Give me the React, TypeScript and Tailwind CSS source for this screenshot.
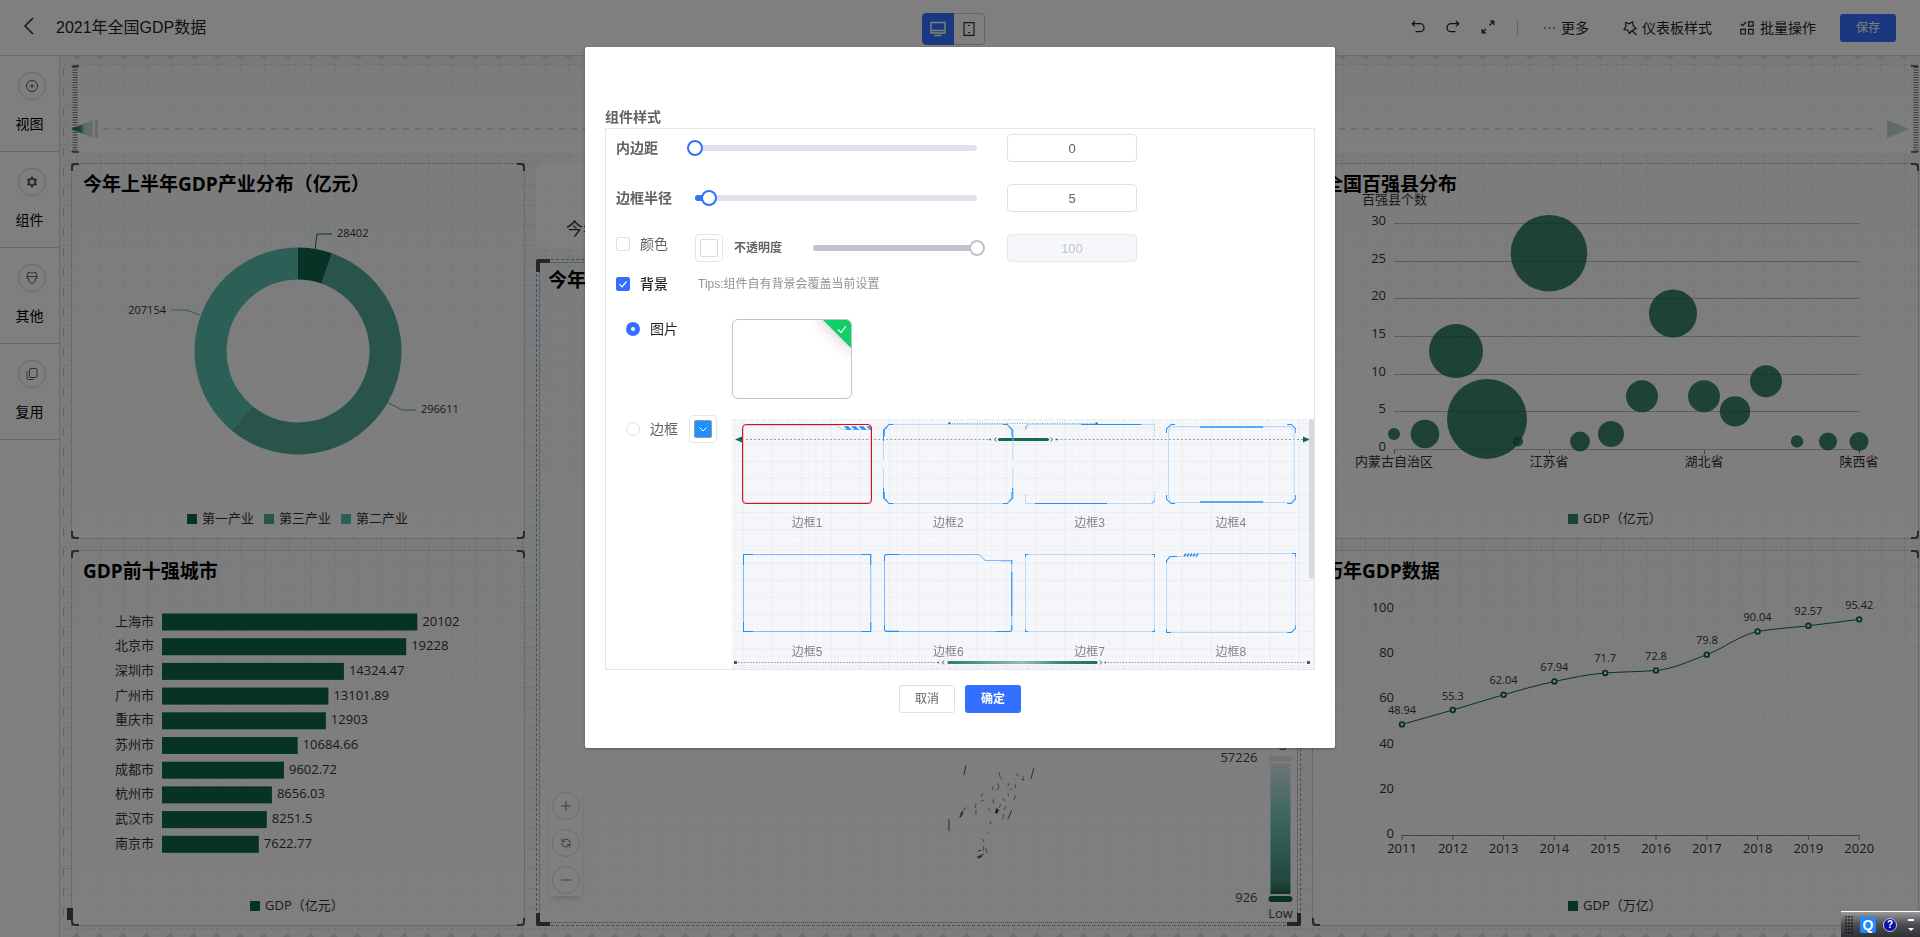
import React, { useState } from 'react';

const GREEN = '#0c664c';
const TEAL = '#52a898';
const MINT = '#58beaa';

interface BarItem {
  name: string;
  value: number;
}

const cities: BarItem[] = [
  { name: '上海市', value: 20102 },
  { name: '北京市', value: 19228 },
  { name: '深圳市', value: 14324.47 },
  { name: '广州市', value: 13101.89 },
  { name: '重庆市', value: 12903 },
  { name: '苏州市', value: 10684.66 },
  { name: '成都市', value: 9602.72 },
  { name: '杭州市', value: 8656.03 },
  { name: '武汉市', value: 8251.5 },
  { name: '南京市', value: 7622.77 },
];

// [number of counties, radius]
const bubbles: [number, number][] = [
  [2, 6], [2, 14.3], [13, 27], [4, 40], [1, 5], [26, 38.3], [1, 10], [2, 13],
  [7, 16], [18, 24], [7, 16], [5, 15.2], [9, 16], [1, 6.2], [1, 9], [1, 9.5],
];

const provinces = ['内蒙古自治区', '江苏省', '湖北省', '陕西省'];

const yearly = [48.94, 55.3, 62.04, 67.94, 71.7, 72.8, 79.8, 90.04, 92.57, 95.42];

/* ---------- widget frame ---------- */

interface PanelProps {
  title: string;
  active?: boolean;
  className?: string;
  children?: React.ReactNode;
}

const Panel: React.FC<PanelProps> = ({ title, active, className = '', children }) => {
  const corner = active ? 'w-[14px] h-[13px] border-[#4a4a4a]' : 'w-2 h-2 border-[#555]';
  const tl = active ? 'border-t-4 border-l-4' : 'border-t-2 border-l-2';
  const tr = active ? 'border-t-4 border-r-4' : 'border-t-2 border-r-2';
  const bl = active ? 'border-b-4 border-l-4' : 'border-b-2 border-l-2';
  const br = active ? 'border-b-4 border-r-4' : 'border-b-2 border-r-2';
  return (
    <section className={`relative min-h-0 bg-linear-to-b from-white/30 to-white/90 ${className}`}>
      <div className={active ? 'absolute inset-0 border border-dashed border-[#57a8e6]' : 'absolute inset-0 border border-dotted border-[#aaa]'} />
      {active && <div className="absolute inset-[3px] border border-dotted border-[#888]" />}
      <span className={`absolute top-0 left-0 rounded-tl ${corner} ${tl}`} />
      <span className={`absolute top-0 right-0 rounded-tr ${corner} ${tr}`} />
      <span className={`absolute bottom-0 left-0 rounded-bl ${corner} ${bl}`} />
      <span className={`absolute bottom-0 right-0 rounded-br ${corner} ${br}`} />
      {children}
      <h2 className="absolute top-[7px] left-3 text-[19px] leading-7 font-bold text-black whitespace-nowrap font-['Open_Sans','Noto_Sans_CJK_SC',sans-serif]">{title}</h2>
    </section>
  );
};

const chartClass = "absolute inset-0 w-full h-full text-[13px] font-['Open_Sans','Noto_Sans_CJK_SC',sans-serif]";

const Legend: React.FC<{ x: number; label: string; color?: string; opacity?: number }> = ({ x, label, color = GREEN, opacity = 1 }) => (
  <g>
    <rect x={x} y="351" width="10" height="10" fill={color} fillOpacity={opacity} />
    <text x={x + 15} y="355" fill="#333" dominantBaseline="central">{label}</text>
  </g>
);

/* ---------- charts ---------- */

const PieChart = () => {
  const cx = 227;
  const cy = 188;
  const data = [
    { value: 28402, color: GREEN },
    { value: 296611, color: TEAL },
    { value: 207154, color: MINT },
  ];
  const total = data.reduce((s, d) => s + d.value, 0);
  const pt = (r: number, a: number) => `${cx + r * Math.sin(a)} ${cy - r * Math.cos(a)}`;
  let angle = 0;
  const slices = data.map((d) => {
    const start = angle;
    angle += (d.value / total) * Math.PI * 2;
    const large = angle - start > Math.PI ? 1 : 0;
    return {
      color: d.color,
      path: `M${pt(103.5, start)}A103.5 103.5 0 ${large} 1 ${pt(103.5, angle)}L${pt(71.5, angle)}A71.5 71.5 0 ${large} 0 ${pt(71.5, start)}Z`,
    };
  });
  return (
    <svg viewBox="0 0 454 376" className={chartClass}>
      {slices.map((s) => <path key={s.color} d={s.path} fill={s.color} />)}
      <g fill="none" strokeWidth="1">
        <path d="M244 86l2-15h15" stroke={GREEN} />
        <path d="M316 239l15 8h14" stroke={TEAL} />
        <path d="M129 152l-14-5h-15" stroke={MINT} />
      </g>
      <g fontSize="11" fill="#333" dominantBaseline="central">
        <text x="266" y="69">28402</text>
        <text x="350" y="245">296611</text>
        <text x="95" y="146" textAnchor="end">207154</text>
      </g>
      <Legend x={116} label="第一产业" />
      <Legend x={193} label="第三产业" color={TEAL} />
      <Legend x={270} label="第二产业" color={MINT} />
    </svg>
  );
};

const BarChart = () => (
  <svg viewBox="0 0 454 376" className={chartClass}>
    {cities.map((c, i) => {
      const y = 63.5 + i * 24.7;
      const w = c.value * 0.0127;
      return (
        <g key={c.name} fill="#333" dominantBaseline="central">
          <text x="83" y={y + 7} textAnchor="end">{c.name}</text>
          <rect x="91" y={y} width={w} height="17" fill={GREEN} />
          <text x={91 + w + 5} y={y + 7}>{c.value}</text>
        </g>
      );
    })}
    <Legend x={179} label="GDP（亿元）" />
  </svg>
);

const BubbleChart = () => {
  const zero = 286;
  const step = 7.53;
  return (
    <svg viewBox="0 0 607 376" className={chartClass}>
      <g fill="#333" dominantBaseline="central">
        <text x="50" y="36">百强县个数</text>
        {[0, 5, 10, 15, 20, 25, 30].map((v) => (
          <g key={v}>
            <line x1="82" x2="547" y1={Math.round(zero - v * step) + 0.5} y2={Math.round(zero - v * step) + 0.5} stroke="#bbb" />
            <text x="74" y={zero - v * step - 3} textAnchor="end">{v}</text>
          </g>
        ))}
        {provinces.map((p, i) => (
          <g key={p}>
            <line x1={82.5 + i * 155} x2={82.5 + i * 155} y1="287" y2="291" stroke="#888" />
            <text x={82 + i * 155} y="298" textAnchor="middle">{p}</text>
          </g>
        ))}
      </g>
      <Legend x={256} label="GDP（亿元）" opacity={0.8} />
      {bubbles.map(([v, r], i) => (
        <circle key={i} cx={82 + i * 31} cy={zero - v * step} r={r} fill={GREEN} fillOpacity="0.8" />
      ))}
    </svg>
  );
};

const LineChart = () => {
  const pts = yearly.map((v, i) => ({ x: 90 + i * 50.8, y: 285 - v * 2.26, v }));
  // harmonic tangents keep the curve from overshooting
  const slope = pts.map((p, i) => {
    const a = pts[Math.max(0, i - 1)];
    const b = pts[Math.min(pts.length - 1, i + 1)];
    if (i === 0 || i === pts.length - 1) return (b.y - a.y) / (b.x - a.x);
    const l = (p.y - a.y) / (p.x - a.x);
    const r = (b.y - p.y) / (b.x - p.x);
    return (2 * l * r) / (l + r);
  });
  const d = pts.reduce((acc, p, i) => {
    if (i === 0) return `M${p.x} ${p.y}`;
    const q = pts[i - 1];
    const h = (p.x - q.x) / 3;
    return `${acc}C${q.x + h} ${q.y + slope[i - 1] * h} ${p.x - h} ${p.y - slope[i] * h} ${p.x} ${p.y}`;
  }, '');
  return (
    <svg viewBox="0 0 607 376" className={chartClass}>
      <g fill="#333" dominantBaseline="central">
        {[0, 20, 40, 60, 80, 100].map((v) => (
          <text key={v} x="82" y={283 - v * 2.26} textAnchor="end">{v}</text>
        ))}
        <line x1="90" x2="547" y1="285.5" y2="285.5" stroke="#888" />
        {pts.map((p, i) => (
          <g key={i}>
            <line x1={p.x} x2={p.x} y1="285" y2="290" stroke="#888" />
            <text x={p.x} y="298" textAnchor="middle">{2011 + i}</text>
            <text x={p.x} y={p.y - 15} textAnchor="middle" fontSize="11">{p.v}</text>
          </g>
        ))}
      </g>
      <Legend x={256} label="GDP（万亿）" />
      <path d={d} fill="none" stroke={GREEN} />
      {pts.map((p) => <circle key={p.v} cx={p.x} cy={p.y} r="2.3" fill="#fff" stroke={GREEN} strokeWidth="1.8" />)}
    </svg>
  );
};

const MapWidget = () => (
  <svg viewBox="0 0 765 668" className={chartClass}>
    <defs>
      <linearGradient id="heat" x1="0" y1="0" x2="0" y2="1">
        <stop offset="0" stopColor="#dfe9ec" />
        <stop offset="0.38" stopColor="#7ed0bf" />
        <stop offset="0.7" stopColor="#55a999" />
        <stop offset="0.9" stopColor="#488c7c" />
        <stop offset="1" stopColor="#1d6650" />
      </linearGradient>
    </defs>
    <g stroke="#555" strokeWidth="1" fill="none">
      <path d="M430 507l-2 10M498 510l-3 11M476 552l-4 9M413 561v12M441 599l7-3M442 593l3-1" />
      <path strokeWidth="0.7" d="M463 514l1 4l2 3M481 515l1 3M485 521l3 1M487 518l1 4M457 528v4M462 525l1 4l-2 3M473 525l-1 3M476 530l-2 2M479 526l1 4M472 535l1 3M447 535l-2 4M458 541l-1 4M467 540l2 3M480 537l-2 5M445 543l3-1M440 546l-1 4M457 543l1 1M424 556l5-6M430 549l-1 2M440 552v5M452 550l2 3M460 550l1 3M465 546l-2 4M470 548l-2 4M468 556l-1 5M455 563l-1 3M453 574l-1 2M447 581l1 3M448 588l-1 5M450 590l1 5" />
      <path stroke="#0b4e3b" strokeWidth="2.5" d="M460 555l2-4" />
      <path stroke="#444" strokeWidth="1.500" d="M424 559l3-5M442 600l4-2" />
    </g>
    <g fill="#444" dominantBaseline="central">
      <text x="745" y="484" textAnchor="middle">High</text>
      <text x="722" y="499" textAnchor="end">57226</text>
      <text x="722" y="639" textAnchor="end">926</text>
      <text x="745" y="655" textAnchor="middle">Low</text>
    </g>
    <rect x="733" y="498" width="24" height="5" rx="2.5" fill="#e2e2e2" />
    <rect x="735" y="505" width="20" height="131" fill="url(#heat)" />
    <rect x="733" y="638" width="24" height="6" rx="3" fill={GREEN} />
  </svg>
);

/* ---------- canvas ---------- */

const CanvasGrid = () => (
  <svg className="absolute inset-0 w-full h-full">
    <defs>
      <pattern id="canvas-grid" x="16.7" y="8" width="23.43" height="20.1" patternUnits="userSpaceOnUse">
        <path d="M.5 0V20" stroke="#d6d8d7" strokeDasharray="2.5 2.5" />
        <path d="M0 .5H23" stroke="#dadcdb" strokeDasharray="2.5 3" />
      </pattern>
      <pattern id="canvas-edge" x="13" y="0" width="23.43" height="6" patternUnits="userSpaceOnUse">
        <path d="M0 .5h8l-2 1.500h-4z" fill="#ccced0" />
      </pattern>
      <pattern id="canvas-foot" x="12" y="0" width="23.43" height="10" patternUnits="userSpaceOnUse">
        <path d="M0 10l4-4l4 4z" fill="#dcdedd" />
      </pattern>
    </defs>
    <rect width="100%" height="100%" fill="url(#canvas-grid)" />
    <rect width="100%" height="4" fill="url(#canvas-edge)" />
    <path d="M3.5 12V870" stroke="#c5c7c8" strokeDasharray="8 12" />
    <svg y="100%" overflow="visible">
      <rect y="-10" width="100%" height="10" fill="url(#canvas-foot)" />
    </svg>
  </svg>
);

const Banner = () => (
  <div className="relative h-[88px] bg-linear-to-b from-white/20 to-white">
    <div className="absolute inset-y-0 left-0 flex items-center">
      <svg width="30" height="88" viewBox="0 0 30 88">
        <defs>
          <linearGradient id="arrow-l">
            <stop offset="0" stopColor="#0c664c" />
            <stop offset="0.45" stopColor="#3f9178" />
            <stop offset="0.6" stopColor="#b5d8cb" />
            <stop offset="1" stopColor="#cfe6de" />
          </linearGradient>
        </defs>
        <path d="M4 2V86" stroke="#777" strokeWidth="5" strokeDasharray="1 1.5" />
        <path d="M1 2q0-1 2-1h5M1 86q0 1 2 1h5" stroke="#444" strokeWidth="1.5" fill="none" />
        <path d="M0 64L22 55V73Z" fill="url(#arrow-l)" />
        <path d="M25.500 55V73" stroke="#d5d9d7" strokeWidth="3" />
      </svg>
    </div>
    <div className="absolute left-8 right-10 top-[63px] h-0.5 bg-[repeating-linear-gradient(90deg,#d8d8d8_0_6px,transparent_6px_12px)]" />
    <div className="absolute inset-y-0 right-0 flex items-center">
      <svg width="34" height="88" viewBox="0 0 34 88">
        <path d="M2 55V73L24 64Z" fill="#c3d6cf" />
        <path d="M31 2V86" stroke="#777" strokeWidth="5" strokeDasharray="1 1.5" />
        <path d="M26 1h5q2 0 2 1M26 87h5q2 0 2-1" stroke="#444" strokeWidth="1.5" fill="none" />
      </svg>
    </div>
  </div>
);

const ZoomControls = () => (
  <div className="absolute left-3.5 bottom-[30px] flex flex-col items-center gap-[9px] w-8 py-0.5 rounded bg-white shadow-md">
    <button aria-label="放大" className="flex items-center justify-center w-7 h-7 rounded-full border border-[#d8d8d8] text-[#777]">
      <svg width="10" height="10" viewBox="0 0 10 10" stroke="currentColor"><path d="M5 0v10M0 5h10" /></svg>
    </button>
    <button aria-label="重置" className="flex items-center justify-center w-7 h-7 rounded-full border border-[#d8d8d8] text-[#777]">
      <svg width="10" height="10" viewBox="0 0 10 10" fill="none" stroke="currentColor"><path d="M1 .5v3h3M9 9.500v-3H6M1.200 3.500A4.200 4.200 0 0 1 9.200 5M8.800 6.500A4.200 4.200 0 0 1 .8 5" /></svg>
    </button>
    <button aria-label="缩小" className="flex items-center justify-center w-7 h-7 rounded-full border border-[#d8d8d8] text-[#777]">
      <svg width="10" height="10" viewBox="0 0 10 10" stroke="currentColor"><path d="M0 5h10" /></svg>
    </button>
  </div>
);

const Canvas = () => (
  <main className="relative flex-1 min-w-0 flex flex-col gap-2.5 pt-[9px] pb-[11px] pl-[11px] pr-px bg-linear-to-b from-[#f3f5f8] to-[#fafafa] overflow-hidden">
    <CanvasGrid />
    <Banner />
    <div className="relative flex-1 min-h-0 grid grid-cols-[454fr_765fr_607fr] gap-[11px]">
      <div className="flex flex-col gap-[11px]">
        <Panel title="今年上半年GDP产业分布（亿元）" className="flex-1"><PieChart /></Panel>
        <Panel title="GDP前十强城市" className="flex-1">
          <BarChart />
          <span className="absolute -left-1 bottom-1.5 w-1.5 h-3 bg-[#444]" />
        </Panel>
      </div>
      <div className="flex flex-col gap-2.5">
        <div className="h-[86px] flex items-center pl-[30px] pt-12 rounded-lg bg-white/90 text-[17px] text-[#333]">今年</div>
        <Panel title="今年" active className="flex-1">
          <MapWidget />
          <ZoomControls />
        </Panel>
      </div>
      <div className="flex flex-col gap-[11px]">
        <Panel title="全国百强县分布" className="flex-1"><BubbleChart /></Panel>
        <Panel title="历年GDP数据" className="flex-1"><LineChart /></Panel>
      </div>
    </div>
  </main>
);

/* ---------- top bar and side bar ---------- */

const TopBar = () => (
  <header className="flex items-center h-14 shrink-0 pl-6 pr-6 pt-px border-b border-[#d5d6d8] bg-white text-sm text-[#1f2329]">
    <button aria-label="返回" className="w-8 pb-1">
      <svg width="10" height="18" viewBox="0 0 10 18" fill="none" stroke="#1f2329" strokeWidth="1.500"><path d="M9 1L1 9l8 8" /></svg>
    </button>
    <h1 className="text-base">2021年全国GDP数据</h1>
    <div className="absolute top-[13px] left-1/2 -translate-x-[38px] flex h-8 rounded overflow-hidden">
      <button aria-label="电脑端" className="flex items-center justify-center w-8 bg-[#3370ff] rounded-l">
        <svg width="16" height="16" viewBox="0 0 16 16" fill="none" stroke="#fff"><path d="M1 1.500h14v10.500H1zM1 9.500h14M4.500 14.500h7" strokeWidth="1.400" /></svg>
      </button>
      <button aria-label="移动端" className="flex items-center justify-center w-[31px] border border-l-0 border-[#c9ccd6] rounded-r">
        <svg width="12" height="14" viewBox="0 0 12 14" fill="none" stroke="#333"><path d="M1 .6h10v12.800H1z" strokeWidth="1.200" /><path d="M5 3.500h2M5 10.500h2" /></svg>
      </button>
    </div>
    <div className="ml-auto flex items-center">
      <div className="flex items-center gap-[21px] pb-0.5">
        <button aria-label="撤销">
          <svg width="14" height="14" viewBox="0 0 14 14" fill="none" stroke="currentColor" strokeWidth="1.300"><path d="M4 1L1.300 3.700L4 6.400M1.300 3.700H9A4 4 0 0 1 9 11.700H4.500" /></svg>
        </button>
        <button aria-label="重做">
          <svg width="14" height="14" viewBox="0 0 14 14" fill="none" stroke="currentColor" strokeWidth="1.300"><path d="M10 1l2.700 2.700L10 6.400M12.700 3.700H5A4 4 0 0 0 5 11.700H9.500" /></svg>
        </button>
        <button aria-label="全屏">
          <svg width="14" height="14" viewBox="0 0 14 14" fill="none" stroke="currentColor" strokeWidth="1.300"><path d="M9 1.200H12.800V5M12.800 1.200L8.500 5.500M5 12.800H1.200V9M1.200 12.800L5 9" /></svg>
        </button>
      </div>
      <span className="w-px h-4 ml-[22px] mr-[26px] bg-[#c4c6ca]" />
      <div className="flex items-center gap-[26px]">
        <button className="flex items-center gap-1.5">
          <svg width="11" height="14" viewBox="0 0 11 14" fill="currentColor"><circle cx="1" cy="7" r=".8" /><circle cx="5.500" cy="7" r=".8" /><circle cx="10" cy="7" r=".8" /></svg>
          更多
        </button>
        <button className="flex items-center gap-1 ml-2">
          <svg width="15" height="15" viewBox="0 0 15 15" fill="none" stroke="currentColor" strokeWidth="1.200"><path d="M2.500 1.300L6 2.800L9.500 1l.7 3.700L13 7.500L10 9l-.7 1.300M2.500 1.300L3 5.300L1 8.500l3.800.7L6.500 12.500L9 9.500M9 9.500l4.500 4.500" /></svg>
          仪表板样式
        </button>
        <button className="flex items-center gap-1.5 ml-0.5">
          <svg width="14" height="14" viewBox="0 0 14 14" fill="none" stroke="currentColor" strokeWidth="1.200"><path d="M.8 3L2.600 4.700L6 1M8.600 .8h4.600v4.400H8.600zM.8 8.400h4.600v4.600H.8zM8.600 8.400h4.600v4.600H8.600z" /></svg>
          批量操作
        </button>
      </div>
      <button className="w-14 h-7 ml-6 rounded-[3px] bg-[#3370ff] text-xs text-white">保存</button>
    </div>
  </header>
);

const sideItems = [
  { label: '视图', icon: <><circle cx="7" cy="7" r="5.500" /><path d="M7 4.500v5M4.500 7h5" /></> },
  { label: '组件', icon: <><circle cx="7" cy="7" r="3.300" strokeWidth="2.200" /><path strokeWidth="2" d="M7 1.500v2M7 10.500v2M2.300 4.200l1.700 1M10 8.800l1.700 1M2.300 9.800l1.700-1M10 5.200l1.700-1" /></> },
  { label: '其他', icon: <path d="M3 1.500h2.500Q7 3 8.500 1.500H11L12 5.500V7.500H10V10L8.500 12h-3L4 10V7.500H2V5.500zM2 5.500h10" /> },
  { label: '复用', icon: <><rect x="4.500" y="1.500" width="7.500" height="9" rx="1.500" /><path d="M2 4.500V11a1.500 1.500 0 0 0 1.500 1.500H9" /></> },
];

const SideBar = () => (
  <nav className="w-[60px] shrink-0 border-r border-[#d5d6d8] bg-white">
    {sideItems.map((s) => (
      <button key={s.label} className="flex flex-col items-center w-full h-24 pt-4 border-b border-[#d0d2d5] text-sm text-black">
        <span className="flex items-center justify-center w-7 h-7 ml-1 rounded-full border border-[#d0d2d5]">
          <svg width="14" height="14" viewBox="0 0 14 14" fill="none" stroke="#5a5e66">{s.icon}</svg>
        </span>
        <span className="mt-3.5">{s.label}</span>
      </button>
    ))}
  </nav>
);

/* ---------- dialog ---------- */

interface SliderProps {
  label: string;
  value: number;
  disabled?: boolean;
  onChange?: (v: number) => void;
}

const Slider: React.FC<SliderProps> = ({ label, value, disabled, onChange }) => (
  <div className="relative flex-1 h-1.5 rounded-[3px] bg-[#dfe2ec]">
    <div className={`h-1.5 rounded-[3px] ${disabled ? 'bg-[#c0c4cc]' : 'bg-[#3370ff]'}`} style={{ width: `${value}%` }} />
    <input
      type="range"
      aria-label={label}
      value={value}
      disabled={disabled}
      onChange={(e) => onChange && onChange(Number(e.target.value))}
      className="absolute -left-2 -top-[5px] w-[calc(100%+16px)] h-4 appearance-none bg-transparent [&::-webkit-slider-thumb]:appearance-none [&::-webkit-slider-thumb]:w-4 [&::-webkit-slider-thumb]:h-4 [&::-webkit-slider-thumb]:rounded-full [&::-webkit-slider-thumb]:border-2 [&::-webkit-slider-thumb]:border-[#3370ff] [&::-webkit-slider-thumb]:bg-white disabled:[&::-webkit-slider-thumb]:border-[#c0c4cc]"
    />
  </div>
);

const NumberBox: React.FC<SliderProps> = ({ label, value, disabled, onChange }) => (
  <input
    type="text"
    aria-label={label}
    value={value}
    disabled={disabled}
    onChange={(e) => onChange && onChange(Number(e.target.value) || 0)}
    className="w-[130px] h-7 ml-[30px] rounded border border-[#dcdfe6] bg-white text-center text-[13px] text-[#606266] disabled:border-[#e4e7ed] disabled:bg-[#f5f7fa] disabled:text-[#c0c4cc]"
  />
);

interface CheckProps {
  label: string;
  checked: boolean;
  onChange: (v: boolean) => void;
}

const Check: React.FC<CheckProps> = ({ label, checked, onChange }) => (
  <label className={`flex items-center gap-2.5 w-[79px] h-5 text-sm ${checked ? 'font-medium text-[#1f2329]' : 'text-[#606266]'}`}>
    <span className="relative flex">
      <input
        type="checkbox"
        checked={checked}
        onChange={(e) => onChange(e.target.checked)}
        className="w-3.5 h-3.5 appearance-none rounded-[2px] border border-[#dcdfe6] bg-white checked:border-[#3370ff] checked:bg-[#3370ff]"
      />
      {checked && (
        <svg className="absolute inset-0 pointer-events-none" width="14" height="14" viewBox="0 0 14 14" fill="none" stroke="#fff" strokeWidth="1.200"><path d="M3.500 7.200L6 9.800L10.500 4.500" /></svg>
      )}
    </span>
    {label}
  </label>
);

const radioClass = 'w-3.5 h-3.5 appearance-none rounded-full border border-[#dcdfe6] bg-white checked:border-[5px] checked:border-[#3370ff]';

const B = '#1e90ff';
const M = '#7dbcfb';
const L = '#b9d9fa';

const frames = [
  <>
    <path d="M2 1.500H95L100 5.500H129" stroke={L} />
    <path d="M128.500 2V77L127 78.500H3L1.500 77V2" stroke={L} />
    <path d="M102 2.500h4l3 3h-4zM109.500 2.500h4l3 3h-4zM117 2.500h4l3 3h-4zM124.500 2.500h4v3h-1z" fill={B} stroke={B} strokeWidth="0.500" />
  </>,
  <>
    <path d="M8 .5H122M8 79.500H122M.5 10V36M129.500 10V36M.5 44V70M129.500 44V70" stroke={L} />
    <path d="M10 .5H6L.5 6V17M120 .5H124L129.500 6V17M10 79.500H6L.5 74V64M120 79.500H124L129.500 74V64" stroke={B} />
    <path d="M1.500 12V6l3-3M128.500 12V6l-3-3M1.500 68V74l3 3M128.500 68V74l-3 3" stroke="#57a9fa" />
  </>,
  <>
    <path d="M.5 5.500L4 .5H129.500V13M129.500 67V76L126 79.500H82L80 78.500M.5 70V79.500H10" stroke={L} />
    <path d="M.5 5.500V3L3 .5M129.500 74V77L126.500 79.500" stroke={M} />
    <path d="M56 .5H116M10 79.500H82" stroke={B} />
  </>,
  <>
    <path d="M6 2.500H124L128 6V74L124 78.500H6L2.500 74V6Z" stroke={L} />
    <path d="M9 .5H5L.5 5V9M121 .5H125L129.500 5V9M9 79.500H5L.5 75V71M121 79.500H125L129.500 75V71" stroke={B} />
    <path d="M34 3H97M34 78H97" stroke="#57a9fa" strokeWidth="2" />
  </>,
  <>
    <path d="M1.500 1.500H128.500V78.500H1.500Z" stroke={M} />
    <path d="M11 1.500H1.500V12M119 1.500H128.500V12M11 78.500H1.500V69M119 78.500H128.500V69" stroke={B} />
  </>,
  <>
    <path d="M3 1.500H96L102 7.500H128.500V77L127 78.500H3L1.500 77V3Z" stroke={M} />
    <path d="M16 1.500H3L1.500 3V8M128.500 19V63M128.500 7V11M113 78.500H127L128.500 77V72M1.500 72V77L3 78.500H16" stroke={B} />
    <path d="M118 8.500H128M3 77.500H16" stroke={L} />
  </>,
  <>
    <path d="M.5 1.500H129.500V78.500H.5Z" stroke={L} />
    <path d="M3 1.500H.5V4M127 1.500H129.500V4M3 78.500H.5V76M127 78.500H129.500V76" stroke={B} />
  </>,
  <>
    <path d="M18 3.500H4L.5 8V79.500H125L129.500 75V.5H32" stroke={L} />
    <path d="M11 3.500H4L.5 8V10M.5 76V79.500H5M121 79.500H125L129.500 75V72M126 .5H129.500V4" stroke={B} />
    <path d="M18 3.500l2-3M21 3.500l2-3M24 3.500l2-3M27 3.500l2-3M30 3.500l2-3" stroke={B} strokeWidth="1.500" />
  </>,
];

const FrameBoard = () => {
  const [selected, setSelected] = useState(0);
  return (
    <div className="relative flex-1 h-[250px] overflow-hidden bg-[#f5f7fa]">
      <svg className="absolute inset-0 w-full h-full" viewBox="0 0 581 250" preserveAspectRatio="none" fill="none">
        <defs>
          <pattern id="board-fine" x="3" y="4" width="7.300" height="6.300" patternUnits="userSpaceOnUse">
            <path d="M.5 0V6.300M0 .5H7.300" stroke="#eef0f2" strokeDasharray="1.500 1" />
          </pattern>
          <pattern id="board-coarse" x="11" y="8" width="29.200" height="17" patternUnits="userSpaceOnUse">
            <path d="M.5 0V17M0 .5H29.200" stroke="#e8eaec" strokeDasharray="1.500 1" />
          </pattern>
          <linearGradient id="bar-fade">
            <stop offset="0" stopColor="#2e7d66" />
            <stop offset="0.5" stopColor="#8fbfb0" />
            <stop offset="0.75" stopColor="#3f8871" />
            <stop offset="1" stopColor="#1f7058" />
          </linearGradient>
        </defs>
        <rect width="581" height="250" fill="url(#board-fine)" />
        <rect width="581" height="250" fill="url(#board-coarse)" />
        <path d="M0 .5H581M0 248.500H581" stroke="#e4e6e7" strokeDasharray="3 3" />
        <path d="M10 20.500H256M324 20.500H570" stroke="#999" strokeDasharray="2 2" />
        <path d="M3 20.500l7-3v6zM577 20.500l-7-3v6z" fill="#136a50" />
        <path d="M267 20.500H315" stroke="#136a50" strokeWidth="3" strokeLinecap="round" />
        <path d="M264 18.500l-2 2l2 2M318 18.500l2 2l-2 2" stroke="#777" />
        <path d="M257 20.500h1.500M323 20.500h1.500" stroke={GREEN} strokeWidth="1.500" />
        <path d="M217 4.500H364" stroke="#7fb09f" strokeDasharray="1 1.500" />
        <path d="M216 4.500h2M363 4.500h2" stroke={GREEN} strokeWidth="2" />
        <path d="M6 243.500H204M375 243.500H573" stroke="#999" strokeDasharray="1.500 1.500" />
        <path d="M2 242h3v3h-3zM574 242h3v3h-3z" fill="#555" />
        <rect x="215" y="242" width="150" height="3" rx="1.500" fill="url(#bar-fade)" />
        <path d="M212 241.500l-2 2l2 2M367 241.500l2 2l-2 2" stroke="#777" />
        <path d="M205 243.500h1.500M372 243.500h1.500" stroke={GREEN} strokeWidth="1.500" />
      </svg>
      <div className="relative grid grid-cols-4 gap-x-[11px] gap-y-[21px] pt-[5px] pl-2.5 pr-[18px]">
        {frames.map((f, i) => (
          <button key={i} onClick={() => setSelected(i)} className="flex flex-col items-center">
            <span className={`relative w-full h-20 ${selected === i ? 'after:absolute after:inset-0 after:rounded after:border after:border-[#f00]' : ''}`}>
              <svg className="w-full h-full" viewBox="0 0 130 80" preserveAspectRatio="none" fill="none">{f}</svg>
            </span>
            <span className="mt-2.5 text-xs leading-[18px] text-[#838383]">边框{i + 1}</span>
          </button>
        ))}
      </div>
      <span className="absolute right-0 top-0 w-[5px] h-40 rounded-full bg-[#d6d9e4]" />
    </div>
  );
};

const StyleDialog = () => {
  const [padding, setPadding] = useState(0);
  const [radius, setRadius] = useState(5);
  const [useColor, setUseColor] = useState(false);
  const [useBackground, setUseBackground] = useState(true);
  const [kind, setKind] = useState('image');

  return (
    <div className="fixed inset-0 flex items-start justify-center pt-[47px] bg-black/50">
      <div role="dialog" aria-labelledby="dialog-title" className="w-[750px] max-w-full px-5 pt-[60px] pb-[35px] rounded-[2px] bg-white shadow-[0_1px_3px_rgba(0,0,0,0.3)] text-[#606266]">
        <h2 id="dialog-title" className="text-sm leading-[21px] font-bold">组件样式</h2>
        <div className="border border-[#e6e6e6] pt-[5px] pl-2.5">
          {/* Padding and radius */}
          <div className="flex items-center h-7 pr-[177px]">
            <span className="w-[79px] text-sm font-bold">内边距</span>
            <Slider label="内边距" value={padding} onChange={setPadding} />
            <NumberBox label="内边距数值" value={padding} onChange={setPadding} />
          </div>
          <div className="flex items-center h-7 mt-[22px] pr-[177px]">
            <span className="w-[79px] text-sm font-bold">边框半径</span>
            <Slider label="边框半径" value={radius} onChange={setRadius} />
            <NumberBox label="边框半径数值" value={radius} onChange={setRadius} />
          </div>

          {/* Colour */}
          <div className="flex items-center h-7 mt-[22px] pr-[177px]">
            <div className="self-start"><Check label="颜色" checked={useColor} onChange={setUseColor} /></div>
            <button aria-label="选择颜色" className="flex items-center justify-center w-7 h-7 rounded border border-[#e6e6e6]">
              <span className="w-[18px] h-[18px] rounded-[2px] border border-[#dcdcdc]" />
            </button>
            <span className="w-[79px] ml-[11px] text-xs font-bold">不透明度</span>
            <Slider label="不透明度" value={100} disabled={!useColor} />
            <NumberBox label="不透明度数值" value={100} disabled={!useColor} />
          </div>

          {/* Background */}
          <div className="flex items-center h-5 mt-3">
            <Check label="背景" checked={useBackground} onChange={setUseBackground} />
            <span className="ml-[3px] text-xs text-[#909399]">Tips:组件自有背景会覆盖当前设置</span>
          </div>
          <div className="flex items-start mt-[25px] pl-2.5">
            <label className="flex items-center gap-2.5 w-[106px] h-5 text-sm text-[#1f2329]">
              <input type="radio" name="kind" checked={kind === 'image'} onChange={() => setKind('image')} className={radioClass} />
              图片
            </label>
            <div className="relative w-[120px] h-20 rounded-md border border-[#b9c6d3] overflow-hidden">
              <span className="absolute -right-[17px] -top-[7px] w-[46px] h-6 rotate-45 bg-[#13ce66] shadow-[0_0_1pc_1px_rgba(0,0,0,0.2)]" />
              <svg className="absolute right-1 top-1" width="10" height="10" viewBox="0 0 10 10" fill="none" stroke="#fff" strokeWidth="1.200"><path d="M1 5.500L4 8.500L9 2" /></svg>
            </div>
          </div>
          <div className="flex items-start mt-5 pl-2.5">
            <div className="flex items-center w-[106px] h-5">
              <label className="flex items-center gap-2.5 h-5 text-sm">
                <input type="radio" name="kind" checked={kind === 'frame'} onChange={() => setKind('frame')} className={radioClass} />
                边框
              </label>
              <button aria-label="边框颜色" className="flex items-center justify-center shrink-0 w-7 h-7 ml-[11px] rounded border border-[#e6e6e6]">
                <span className="flex items-center justify-center w-[18px] h-[18px] rounded-[2px] border border-[#999] bg-[#1e90ff]">
                  <svg width="8" height="8" viewBox="0 0 8 8" fill="none" stroke="#fff"><path d="M.5 2.500L4 6L7.500 2.500" /></svg>
                </span>
              </button>
            </div>
            <FrameBoard />
          </div>
        </div>
        <div className="flex justify-center gap-2.5 pt-[15px] text-xs">
          <button className="w-14 h-7 rounded-[3px] border border-[#dcdfe6] text-[#606266]">取消</button>
          <button className="w-14 h-7 rounded-[3px] bg-[#3370ff] font-bold text-white">确定</button>
        </div>
      </div>
    </div>
  );
};

// Input method bar docked to the screen corner
const ImeBar = () => (
  <div className="fixed right-0 bottom-0 flex items-center w-[79px] h-[26px] pl-1 border-t border-white bg-linear-to-b from-[#9a9a9a] via-[#4a4c50] to-[#2f3136]">
    <svg width="8" height="20" viewBox="0 0 8 20" fill="none" stroke="#111" strokeWidth="1.500" strokeDasharray="1.500 1.700"><path d="M1 1V19M4 1V19M7 1V19" /></svg>
    <span className="flex items-center justify-center w-4 h-4 ml-[7px] rounded-[2px] bg-[#1e88ff] text-sm font-bold text-white">Q</span>
    <span className="flex items-center justify-center w-3.5 h-3.5 ml-[7px] rounded-full border border-[#c8c8d8] bg-[#0a12a8] text-[10px] font-bold text-white">?</span>
    <svg className="ml-[11px]" width="6" height="16" viewBox="0 0 6 16" fill="#fff"><path d="M0 2h6v2H0zM0 11h6l-3 3z" /></svg>
  </div>
);

const App = () => (
  <div className="flex flex-col h-screen overflow-hidden bg-white font-['Liberation_Sans','Noto_Sans_CJK_SC',sans-serif]">
    <TopBar />
    <div className="flex flex-1 min-h-0">
      <SideBar />
      <Canvas />
    </div>
    <StyleDialog />
    <ImeBar />
  </div>
);

export default App;
